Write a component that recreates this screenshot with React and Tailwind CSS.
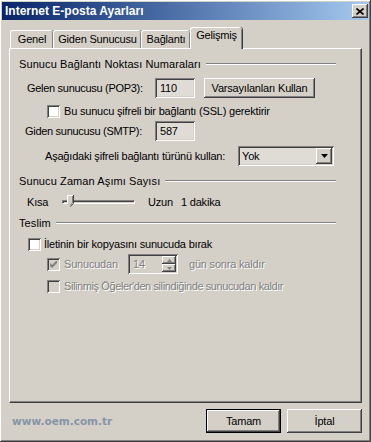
import React from "react";

const raised =
  "shadow-[inset_-1px_-1px_#404040,inset_1px_1px_#ffffff,inset_-2px_-2px_#808080,inset_2px_2px_#d4d0c8]";
const sunken =
  "shadow-[inset_1px_1px_#808080,inset_-1px_-1px_#ffffff,inset_2px_2px_#404040,inset_-2px_-2px_#d4d0c8]";
const dim = "text-[#808080] [text-shadow:1px_1px_#ffffff]";

const Check = ({ checked, disabled }) => (
  <div
    className={`w-[13px] h-[13px] shrink-0 flex items-center justify-center ${sunken} ${
      disabled ? "bg-[#d4d0c8]" : "bg-white"
    }`}
  >
    {checked && (
      <svg width="7" height="7" viewBox="0 0 7 7">
        <path
          d="M0 2 L2 4 L7 -1 L7 2 L2 7 L0 5 Z"
          fill={disabled ? "#808080" : "#000000"}
        />
      </svg>
    )}
  </div>
);

const GroupHeader = ({ title, className = "" }) => (
  <div className={`ml-[9px] w-[317px] h-[14px] flex items-center ${className}`}>
    <span className="whitespace-nowrap tracking-[0.1px]">{title}</span>
    <div className="flex-1 ml-[5px] h-0 border-t border-t-[#808080] border-b border-b-white" />
  </div>
);

const Tab = ({ label, width, active }) => (
  <div
    className={`${width} flex justify-center rounded-t-[3px] border-l border-t border-white shadow-[inset_-1px_0_#808080,1px_0_#404040] ${
      active
        ? "h-[22px] -mb-px relative z-10 bg-[#d4d0c8] pt-[2px]"
        : "h-[18px] pt-[3px]"
    }`}
  >
    {label}
  </div>
);

export default function App() {
  return (
    <div
      className={`w-[371px] h-[442px] bg-[#d4d0c8] p-[2px] text-[11px] leading-none tracking-[-0.2px] text-black ${raised} font-['Liberation_Sans',Arial,sans-serif]`}
    >
      {/* Title bar */}
      <div className="h-[18px] flex items-center justify-between bg-linear-to-r from-[#0a246a] to-[#a6caf0] pl-[3px] pr-[1px]">
        <span className="text-white font-bold text-[12px] tracking-normal">
          Internet E-posta Ayarları
        </span>
        <div className={`w-[16px] h-[14px] bg-[#d4d0c8] flex items-center justify-center ${raised}`}>
          <svg width="8" height="7" viewBox="0 0 8 7">
            <path d="M0.5 0.5 L7.5 6.5 M7.5 0.5 L0.5 6.5" stroke="#000" strokeWidth="1.6" />
          </svg>
        </div>
      </div>

      {/* Tabs */}
      <div className="ml-[8px] mt-[7px] h-[21px] flex items-end">
        <Tab label="Genel" width="w-[43px]" />
        <Tab label="Giden Sunucusu" width="w-[88px]" />
        <Tab label="Bağlantı" width="w-[49px]" />
        <Tab label="Gelişmiş" width="w-[52px]" active />
      </div>

      {/* Panel */}
      <div className="ml-[7px] w-[353px] h-[355px] flex flex-col border-l border-t border-white border-r border-b border-r-[#404040] border-b-[#404040] shadow-[inset_-1px_-1px_#808080]">
        <GroupHeader title="Sunucu Bağlantı Noktası Numaraları" className="mt-[8px]" />

        <div className="mt-[7px] h-[20px] flex items-center pl-[17px]">
          <span className="w-[128px] tracking-[-0.3px]">Gelen sunucusu (POP3):</span>
          <div className={`w-[40px] h-[20px] flex items-center pl-[5px] bg-[#dfdcd6] ${sunken}`}>
            110
          </div>
          <div className={`ml-[9px] w-[111px] h-[20px] flex items-center justify-center ${raised}`}>
            Varsayılanları Kullan
          </div>
        </div>

        <div className="mt-[7px] h-[13px] flex items-center pl-[37px]">
          <Check />
          <span className="ml-[4px]">Bu sunucu şifreli bir bağlantı (SSL) gerektirir</span>
        </div>

        <div className="mt-[3px] h-[20px] flex items-center pl-[15px]">
          <span className="w-[130px] tracking-[-0.3px]">Giden sunucusu (SMTP):</span>
          <div className={`w-[40px] h-[20px] flex items-center pl-[5px] bg-[#dfdcd6] ${sunken}`}>
            587
          </div>
        </div>

        <div className="mt-[5px] h-[20px] flex items-center pl-[35px]">
          <span className="w-[193px]">Aşağıdaki şifreli bağlantı türünü kullan:</span>
          <div className={`w-[96px] h-[20px] flex items-center justify-between pl-[4px] pr-[2px] bg-[#dfdcd6] ${sunken}`}>
            <span>Yok</span>
            <div className={`w-[16px] h-[16px] bg-[#d4d0c8] flex items-center justify-center ${raised}`}>
              <svg width="7" height="4" viewBox="0 0 7 4">
                <path d="M0 0 H7 L3.5 4 Z" fill="#000" />
              </svg>
            </div>
          </div>
        </div>

        <GroupHeader title="Sunucu Zaman Aşımı Sayısı" className="mt-[8px]" />

        <div className="mt-[6px] h-[16px] flex items-center pl-[17px]">
          <span className="w-[35px]">Kısa</span>
          <div className="relative w-[73px] h-[16px] flex items-center">
            <div className="w-full h-[4px] border-t border-l border-[#808080] border-b border-r border-b-white border-r-white shadow-[inset_1px_1px_#404040]" />
            <svg className="absolute left-[5px] top-[1px]" width="7" height="12" viewBox="0 0 7 12">
              <path d="M0.5 0.5 H6 V8 L3.25 11 L0.5 8 Z" fill="#d4d0c8" />
              <path d="M0.5 8 V0.5 H6" stroke="#fff" fill="none" />
              <path d="M6.5 0 V8.2 L3.3 11.6" stroke="#404040" fill="none" />
              <path d="M5.5 1 V7.8 L3.2 10.4" stroke="#808080" fill="none" />
            </svg>
          </div>
          <span className="ml-[13px] w-[33px]">Uzun</span>
          <span>1 dakika</span>
        </div>

        <GroupHeader title="Teslim" className="mt-[6px]" />

        <div className="mt-[8px] h-[13px] flex items-center pl-[18px]">
          <Check />
          <span className="ml-[3px]">İletinin bir kopyasını sunucuda bırak</span>
        </div>

        <div className="mt-[3px] h-[20px] flex items-center pl-[37px]">
          <Check checked disabled />
          <span className={`ml-[4px] w-[64px] ${dim}`}>Sunucudan</span>
          <div className={`w-[50px] h-[20px] flex items-center justify-between pl-[5px] pr-[2px] bg-[#d4d0c8] ${sunken}`}>
            <span className={dim}>14</span>
            <div className="flex flex-col w-[14px]">
              <div className={`h-[8px] bg-[#d4d0c8] flex items-center justify-center ${raised}`}>
                <svg width="5" height="3" viewBox="0 0 5 3">
                  <path d="M0 3 H5 L2.5 0 Z" fill="#808080" />
                </svg>
              </div>
              <div className={`h-[8px] bg-[#d4d0c8] flex items-center justify-center ${raised}`}>
                <svg width="5" height="3" viewBox="0 0 5 3">
                  <path d="M0 0 H5 L2.5 3 Z" fill="#808080" />
                </svg>
              </div>
            </div>
          </div>
          <span className={`ml-[11px] ${dim}`}>gün sonra kaldır</span>
        </div>

        <div className="mt-[6px] h-[13px] flex items-center pl-[37px]">
          <Check disabled />
          <span className={`ml-[4px] tracking-[-0.4px] ${dim}`}>
            Silinmiş Öğeler'den silindiğinde sunucudan kaldır
          </span>
        </div>
      </div>

      {/* Bottom */}
      <div className="ml-[7px] w-[353px] mt-[6px] h-[24px] flex items-center justify-between">
        <span className="pl-[3px] font-bold text-[10.5px] tracking-normal text-[#8595a8] font-['DejaVu_Sans',Verdana,sans-serif]">
          www.oem.com.tr
        </span>
        <div className="flex gap-[6px]">
          <div className="w-[75px] h-[24px] border border-black">
            <div className={`w-full h-full flex items-center justify-center ${raised}`}>Tamam</div>
          </div>
          <div className={`w-[75px] h-[24px] flex items-center justify-center ${raised}`}>İptal</div>
        </div>
      </div>
    </div>
  );
}
